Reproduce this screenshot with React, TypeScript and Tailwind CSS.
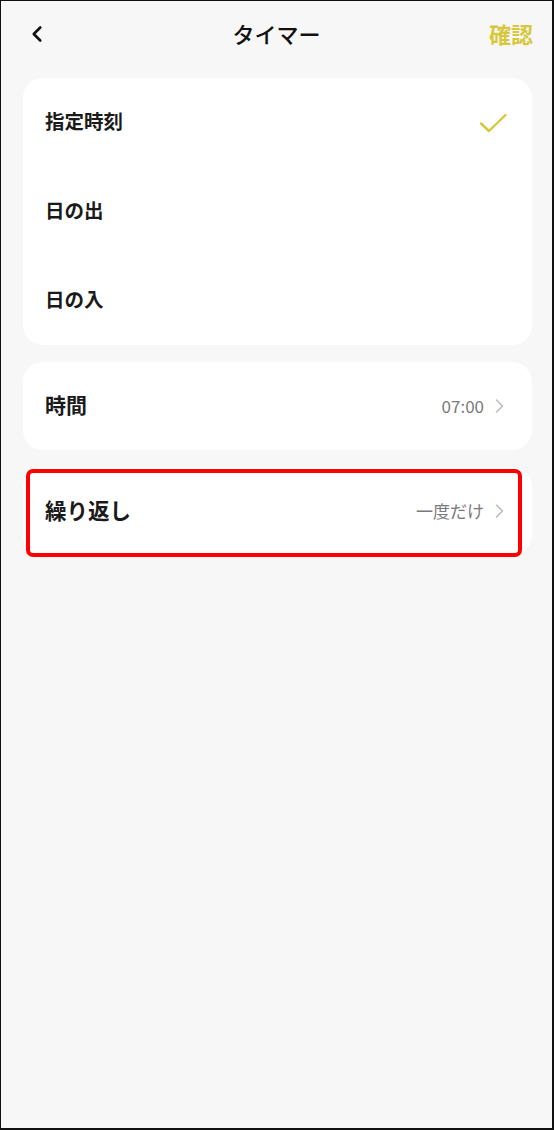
import { ChevronLeft } from "lucide-react";

const font = {
  fontFamily: '"Noto Sans CJK JP", "Noto Sans", sans-serif',
};

function Chevron() {
  return (
    <svg width="9" height="16" viewBox="0 0 9 16" fill="none" className="text-[#bdbdbd]">
      <path d="M1.5 2l6 6-6 6" stroke="currentColor" strokeWidth="1.6" strokeLinecap="round" strokeLinejoin="round" />
    </svg>
  );
}

function Check() {
  return (
    <svg width="28" height="20" viewBox="0 0 28 20" fill="none" className="text-[#d7c73c]">
      <path d="M2 10.5l8 7.5L26.5 2" stroke="currentColor" strokeWidth="2.4" strokeLinecap="round" strokeLinejoin="round" />
    </svg>
  );
}

function OptionRow({ label, checked }: { label: string; checked?: boolean }) {
  return (
    <div className="h-[89px] flex items-center justify-between pl-[22px] pr-[25px]">
      <span className="text-[19.5px] font-bold text-[#1a1a1a] -mt-[3px]">{label}</span>
      {checked ? <Check /> : null}
    </div>
  );
}

function ValueRow({ label, value, large }: { label: string; value: string; large?: boolean }) {
  return (
    <div className="h-[88px] flex items-center justify-between pl-[22px] pr-[28px]">
      <span className={`${large ? "text-[21.5px]" : "text-[21px]"} font-bold text-[#1a1a1a] -mt-[2px]`}>{label}</span>
      <div className="flex items-center gap-[11px]">
        <span className="text-[17px] text-[#7a7a7a]">{value}</span>
        <Chevron />
      </div>
    </div>
  );
}

export default function App() {
  return (
    <div
      style={font}
      className="w-[554px] h-[1130px] bg-[#f7f7f7] border-l border-t border-r-2 border-b-2 border-[#111] overflow-hidden"
    >
      <header className="h-[65px] grid grid-cols-[1fr_auto_1fr] items-center px-[24px]">
        <ChevronLeft size={26} strokeWidth={2.4} className="text-[#111] -ml-[1px]" />
        <h1 className="text-[22px] font-medium text-[#111]">タイマー</h1>
        <span className="justify-self-end -mr-[5px] text-[22px] font-bold text-[#d7c73c]">確認</span>
      </header>

      <div className="flex flex-col pl-[22px] pr-[20px] pt-[12px]">
        <section className="bg-white rounded-[20px]">
          <OptionRow label="指定時刻" checked />
          <OptionRow label="日の出" />
          <OptionRow label="日の入" />
        </section>

        <section className="bg-white rounded-[20px] mt-[17px]">
          <ValueRow label="時間" value="07:00" />
        </section>

        <section className="relative bg-white rounded-[20px] mt-[17px]">
          <ValueRow label="繰り返し" value="一度だけ" large />
          <div className="absolute left-[3px] right-[10px] top-[2px] bottom-[-2px] border-[4px] border-[#ff0000] rounded-[7px]" />
        </section>
      </div>
    </div>
  );
}
